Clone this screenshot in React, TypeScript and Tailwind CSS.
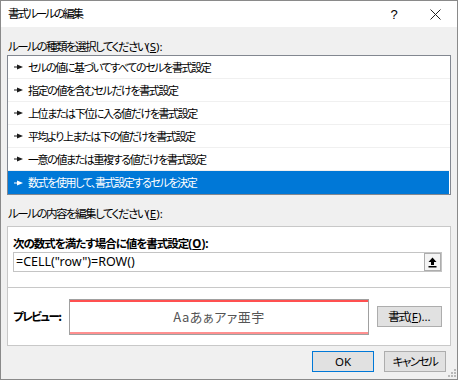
import React from "react";

const rules = [
  "セルの値に基づいてすべてのセルを書式設定",
  "指定の値を含むセルだけを書式設定",
  "上位または下位に入る値だけを書式設定",
  "平均より上または下の値だけを書式設定",
  "一意の値または重複する値だけを書式設定",
  "数式を使用して、書式設定するセルを決定",
];

function Accel({ k, tail = ":" }: { k: string; tail?: string }) {
  return (
    <span className="tracking-normal" style={{ fontFamily: '"Noto Sans", sans-serif' }}>
      (<span className="underline">{k}</span>){tail}
    </span>
  );
}

function Bullet({ color }: { color: string }) {
  return (
    <svg width="9" height="6" viewBox="0 0 9 6" className="shrink-0">
      <rect x="0" y="2.5" width="4" height="1" fill={color} />
      <polygon points="3,0.5 9,3 3,5.5" fill={color} />
    </svg>
  );
}

function Grip() {
  const dots = [
    [6, 0],
    [3, 3],
    [6, 3],
    [0, 6],
    [3, 6],
    [6, 6],
  ];
  return (
    <svg width="8" height="8" viewBox="0 0 8 8">
      {dots.map(([x, y], i) => (
        <rect key={i} x={x} y={y} width="2" height="2" fill="#b8b8b8" />
      ))}
    </svg>
  );
}

export default function App() {
  return (
    <div
      className="w-[458px] h-[380px] border border-[#8a8a8a] bg-[#f0f0f0] flex flex-col text-[11.5px] tracking-[-1.5px] text-black [font-feature-settings:'palt'] overflow-hidden"
      style={{ fontFamily: '"Noto Sans CJK JP", "Noto Sans", sans-serif' }}
    >
      {/* title bar */}
      <div className="h-[26px] bg-white flex items-center shrink-0">
        <span className="pl-[7px] flex-1 leading-none tracking-[-2px]">書式ルールの編集</span>
        <span className="w-[38px] text-center leading-none text-[13px] tracking-normal" style={{ fontFamily: '"Liberation Sans", sans-serif' }}>?</span>
        <span className="w-[44px] flex items-center justify-center">
          <svg width="11" height="11" viewBox="0 0 11 11">
            <path d="M0.5 0.5 L10.5 10.5 M10.5 0.5 L0.5 10.5" stroke="#222" strokeWidth="1" />
          </svg>
        </span>
      </div>

      <div className="flex flex-col px-[6px] flex-1">
        <div className="h-[28px] flex items-end pb-[3px] pl-[1px] leading-none">
          <span>ルールの種類を選択してください</span>
          <Accel k="S" />
        </div>
        <div className="border border-[#828790] bg-white flex flex-col">
          {rules.map((r, i) => {
            const sel = i === rules.length - 1;
            return (
              <div
                key={i}
                className={
                  sel
                    ? "h-[23px] flex items-center gap-[5px] pl-[6px] bg-[#0078d7] text-white mr-[1px]"
                    : "h-[23px] flex items-center gap-[5px] pl-[6px] border-b border-[#f0f0f0]"
                }
              >
                <Bullet color={sel ? "#ffffff" : "#1a1a1a"} />
                <span className="leading-none text-[11px] tracking-[-1.4px]">{r}</span>
              </div>
            );
          })}
        </div>

        <div className="h-[31px] flex items-end pb-[7px] pl-[1px] leading-none">
          <span>ルールの内容を編集してください</span>
          <Accel k="E" />
        </div>

        <div className="bg-white border border-[#c8c8c8] flex flex-col h-[120px]">
          <div className="h-[61px] flex flex-col px-[5px] border-b border-[#c8c8c8]">
            <div className="h-[25px] flex items-end pb-[3px] font-bold leading-none tracking-[-1px]">
              <span>次の数式を満たす場合に値を書式設定</span>
              <Accel k="O" />
            </div>
            <div className="h-[20px] border border-[#c4c4c4] flex items-center mr-[3px]">
              <span className="flex-1 pl-[2px] leading-none text-[12.5px] tracking-normal" style={{ fontFamily: '"Noto Sans", "Noto Sans CJK JP", sans-serif' }}>
                =CELL("row")=ROW()
              </span>
              <div className="w-[17px] h-[18px] border border-[#adadad] bg-[#f4f4f4] flex items-center justify-center">
                <svg width="9" height="11" viewBox="0 0 9 11">
                  <polygon points="4.5,0.5 8.5,5 6,5 6,8 3,8 3,5 0.5,5" fill="#000" />
                  <rect x="0.5" y="9" width="8" height="1.5" fill="#000" />
                </svg>
              </div>
            </div>
          </div>
          <div className="flex-1 flex items-center px-[5px] gap-0">
            <span className="w-[56px] font-bold leading-none whitespace-nowrap">プレビュー:</span>
            <div className="w-[300px] h-[36px] border border-[#a0a0a0] bg-white flex flex-col">
              <div className="h-[2px] bg-[#ff5050]" />
              <div className="flex-1 flex items-center justify-center text-[#555] text-[13px] leading-none tracking-[0.5px]">
                Aaあぁアァ亜宇
              </div>
              <div className="h-[2px] bg-[#ff9090]" />
            </div>
            <div className="ml-[8px] w-[65px] h-[21px] border border-[#adadad] bg-[#e1e1e1] flex items-center justify-center leading-none">
              <span>書式</span>
              <Accel k="F" tail="..." />
            </div>
          </div>
        </div>

        <div className="flex-1 flex items-start justify-end pt-[5px] relative">
          <div className="w-[62px] h-[21px] border border-[#0078d7] bg-[#e1e1e1] flex items-center justify-center leading-none tracking-normal" style={{ fontFamily: '"Noto Sans", sans-serif' }}>
            OK
          </div>
          <div className="ml-[10px] mr-[5px] w-[62px] h-[21px] border border-[#adadad] bg-[#e1e1e1] flex items-center justify-center leading-none">
            キャンセル
          </div>
          <div className="absolute right-[-5px] bottom-[2px]">
            <Grip />
          </div>
        </div>
      </div>
    </div>
  );
}
